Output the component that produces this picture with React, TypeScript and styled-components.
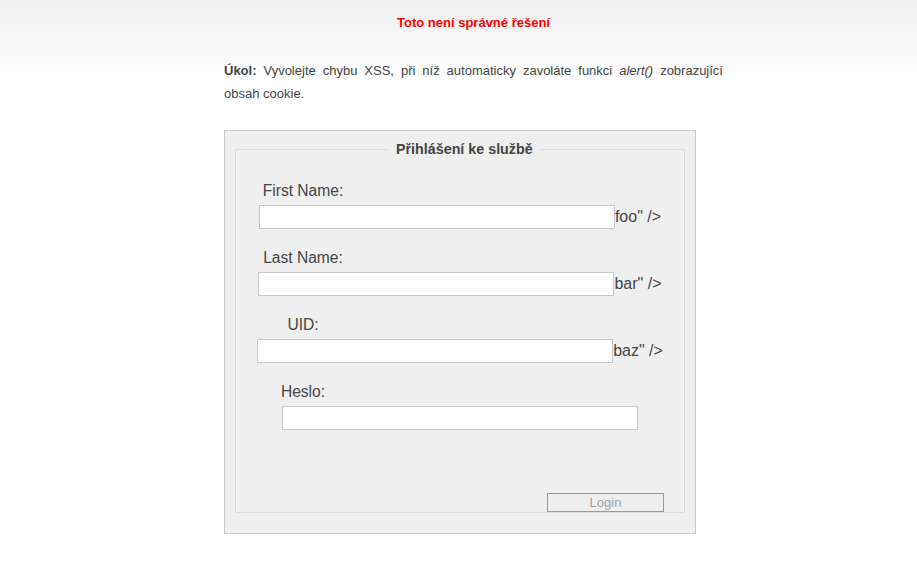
import React from "react";
import styled, { createGlobalStyle } from "styled-components";

const Global = createGlobalStyle`
  html, body { margin: 0; padding: 0; background: #fff; }
  body { font-family: "Liberation Sans", Arial, sans-serif; color: #444; }
`;

const Page = styled.div`
  min-height: 581px;
  background: linear-gradient(#f0f0f0 0px, #fcfcfc 73px, #ffffff 73px) no-repeat;
  padding-top: 14px;
  box-sizing: border-box;
`;

const Column = styled.div`
  margin-left: 224px;
  width: 499px;
`;

const Title = styled.div`
  color: #ff0000;
  font-weight: bold;
  font-size: 13px;
  line-height: 18px;
  text-align: center;
`;

const Task = styled.p`
  margin: 27px 0 0;
  font-size: 13px;
  line-height: 23px;
  text-align: justify;
  color: #444;
`;

const Box = styled.div`
  margin-top: 25px;
  width: 472px;
  box-sizing: border-box;
  border: 1px solid #c9c9c9;
  background: #efefef;
  padding: 10px 10px 20px;
`;

const Fieldset = styled.fieldset`
  margin: 0;
  padding: 0;
  border: 1px solid #dcdcdc;
  display: flex;
  flex-direction: column;
  min-width: 0;
`;

const Legend = styled.legend`
  margin-left: 152px;
  padding: 0 7px 0 8px;
  font-size: 14.3px;
  font-weight: bold;
  line-height: 16px;
  color: #444;
`;

const Rows = styled.div`
  display: flex;
  flex-direction: column;
  gap: 20px;
  padding-top: 25px;
`;

const Field = styled.div`
  display: flex;
  flex-direction: column;
  gap: 5px;
`;

const Label = styled.label`
  width: 134px;
  text-align: center;
  font-size: 15.6px;
  line-height: 18px;
  color: #444;
`;

const Line = styled.div`
  display: flex;
  justify-content: center;
  align-items: center;
`;

const Input = styled.input`
  width: 356px;
  height: 24px;
  box-sizing: border-box;
  border: 1px solid #c8c8c8;
  background: #fff;
  margin: 0;
  padding: 2px 4px;
  font-size: 14px;
  font-family: "Liberation Sans", Arial, sans-serif;
  outline: none;
`;

const Tail = styled.span`
  font-size: 16px;
  color: #444;
  white-space: pre;
`;

const Footer = styled.div`
  display: flex;
  justify-content: flex-end;
  padding: 63px 20px 0 0;
`;

const LoginButton = styled.button`
  width: 117px;
  height: 19px;
  box-sizing: border-box;
  border: 1px solid #999;
  background: #efefef;
  color: #a0a0a0;
  font-family: "Liberation Sans", Arial, sans-serif;
  font-size: 13px;
  line-height: 15px;
  padding: 0;
  margin: 0;
`;

const fields = [
  { label: "First Name:", tail: "foo\" />" },
  { label: "Last Name:", tail: "bar\" />" },
  { label: "UID:", tail: "baz\" />" },
  { label: "Heslo:", tail: "", password: true },
];

export default function App() {
  return (
    <>
      <Global />
      <Page>
        <Column>
          <Title>Toto není správné řešení</Title>
          <Task>
            <b>Úkol:</b> Vyvolejte chybu XSS, při níž automaticky zavoláte funkci{" "}
            <i>alert()</i> zobrazující obsah cookie.
          </Task>
          <Box>
            <Fieldset>
              <Legend>Přihlášení ke službě</Legend>
              <Rows>
                {fields.map((f) => (
                  <Field key={f.label}>
                    <Label>{f.label}</Label>
                    <Line>
                      <Input type={f.password ? "password" : "text"} />
                      {f.tail && <Tail>{f.tail}</Tail>}
                    </Line>
                  </Field>
                ))}
              </Rows>
              <Footer>
                <LoginButton disabled>Login</LoginButton>
              </Footer>
            </Fieldset>
          </Box>
        </Column>
      </Page>
    </>
  );
}
